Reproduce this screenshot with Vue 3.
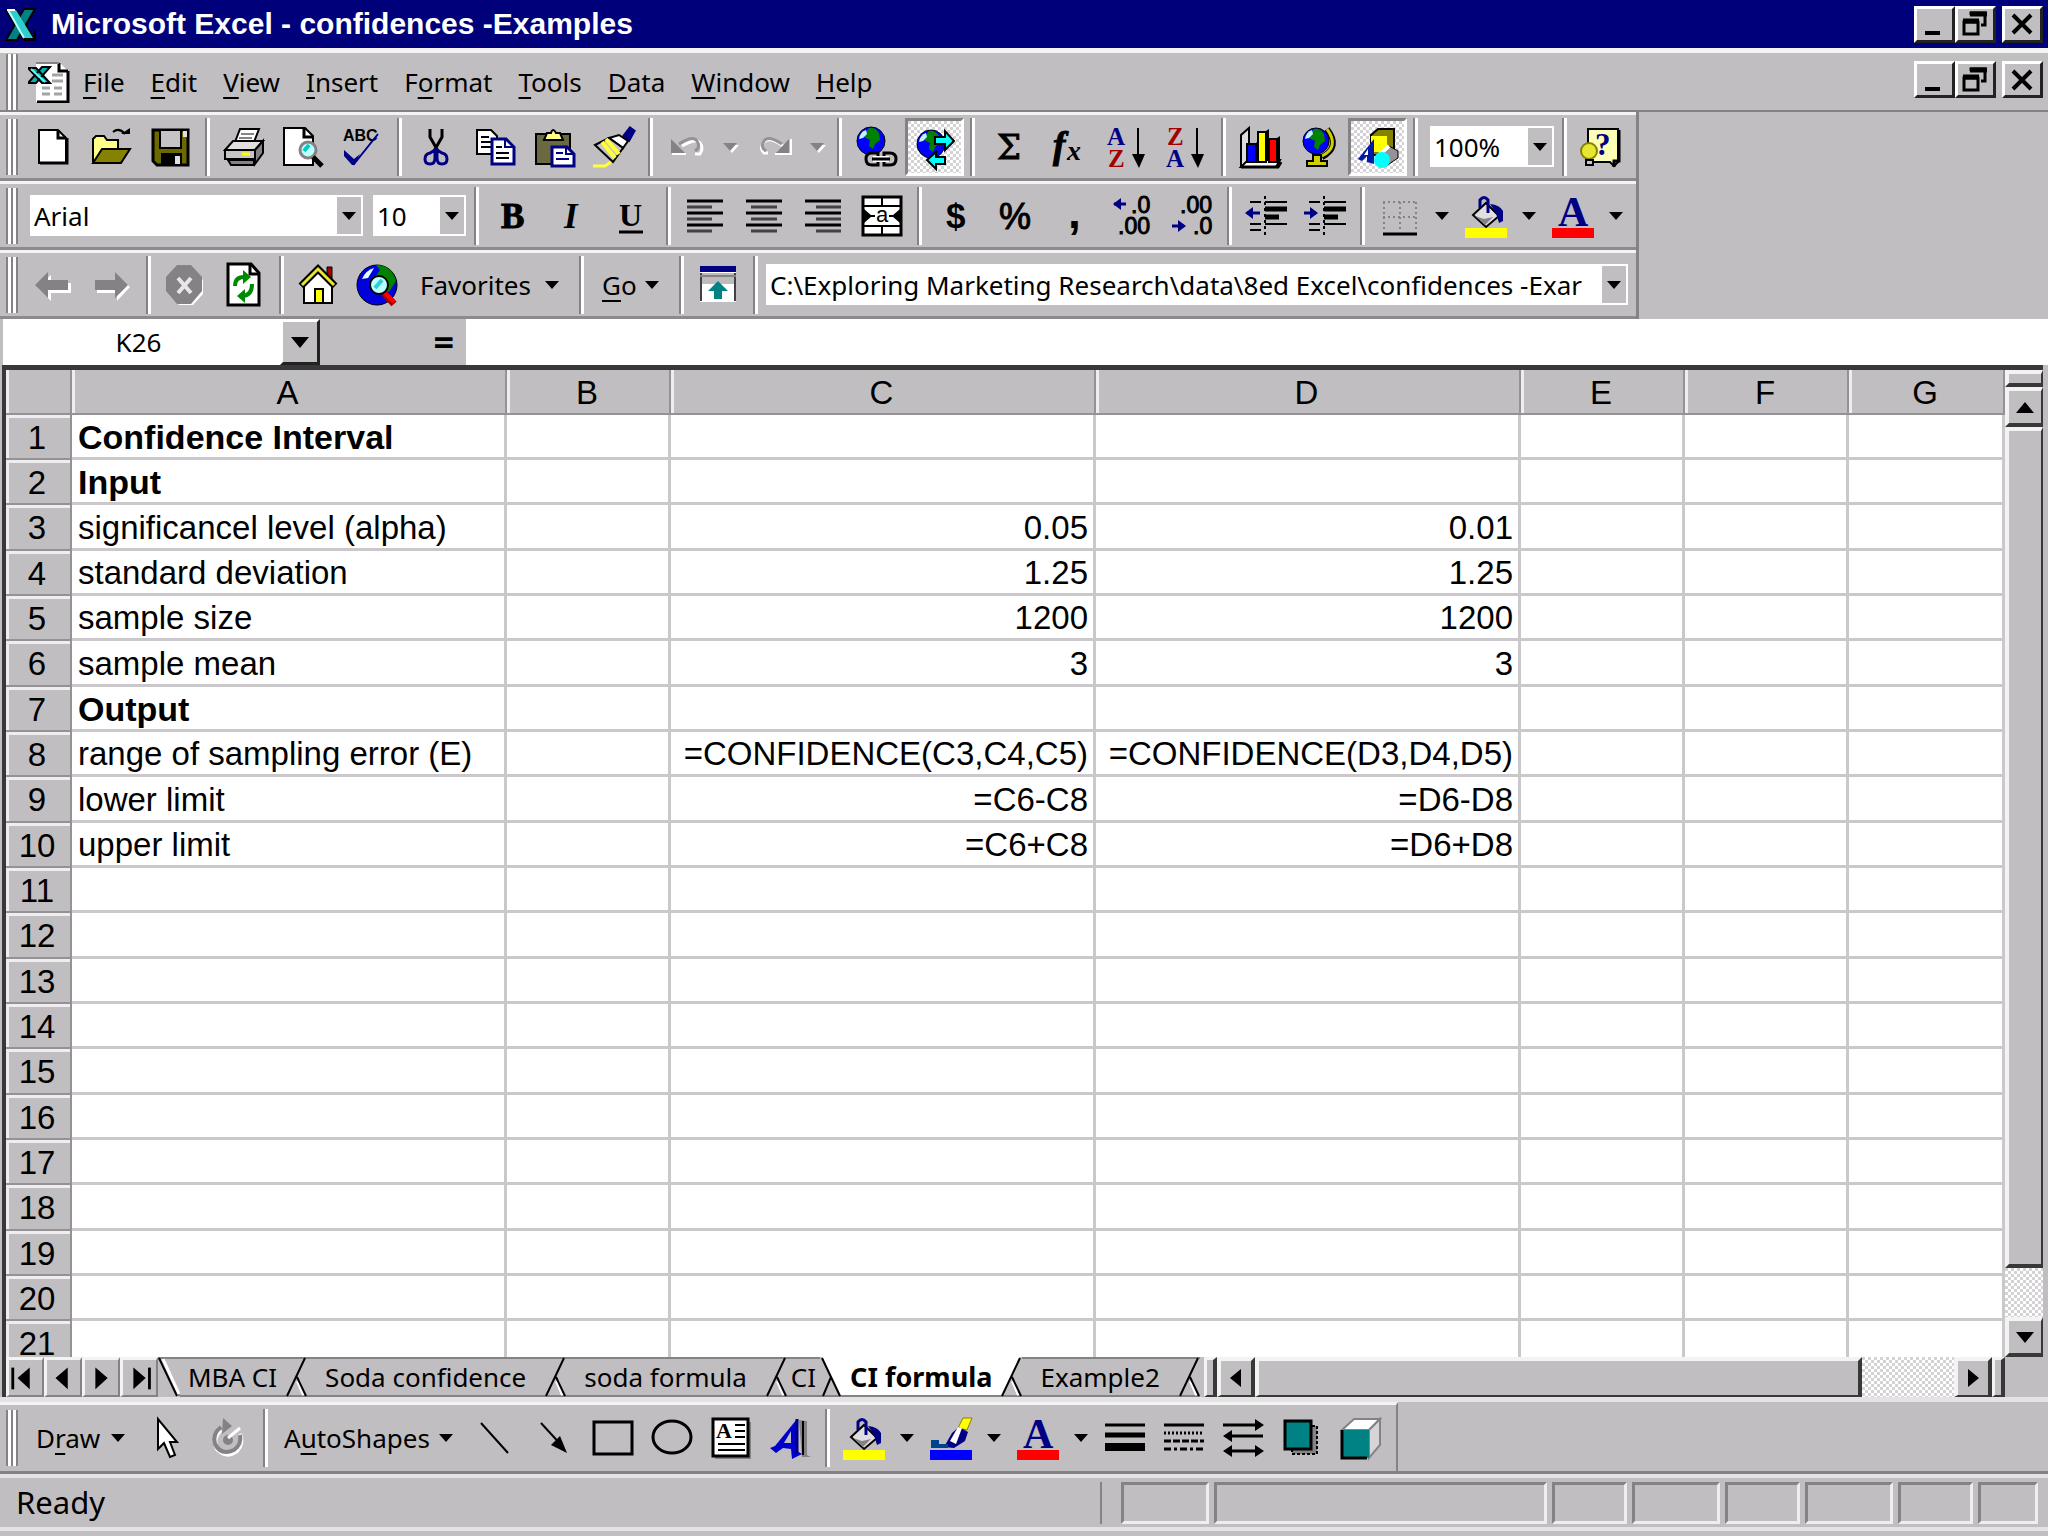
<template>
  <div class="excel">
    <header class="title-bar">
      <svg class="app-logo" viewBox="0 0 34 36" v-html="icons.logo"></svg>
      <h1 class="title">Microsoft Excel - confidences -Examples</h1>
      <div class="window-buttons">
        <button v-for="b in windowButtons" :key="b" class="win-btn" :class="b" :aria-label="b">
          <svg viewBox="0 0 34 30" v-html="icons[b]"></svg>
        </button>
      </div>
    </header>

    <nav class="menu-bar">
      <span class="grip"></span>
      <svg class="book-icon" viewBox="0 0 42 42" v-html="icons.book"></svg>
      <button v-for="m in menus" :key="m[1] + m[2]" class="menu-item">{{ m[0] }}<u>{{ m[1] }}</u>{{ m[2] }}</button>
      <div class="window-buttons">
        <button v-for="b in windowButtons" :key="b" class="win-btn" :class="b" :aria-label="'workbook ' + b">
          <svg viewBox="0 0 34 30" v-html="icons[b]"></svg>
        </button>
      </div>
    </nav>

    <div class="toolbars">
      <div v-for="(bar, n) in toolbars" :key="n" class="toolbar">
        <span class="grip"></span>
        <template v-for="(item, i) in bar" :key="i">
          <span v-if="item === '|'" class="sep"></span>
          <div v-else-if="item.combo" class="combo" :class="item.combo">
            <select :aria-label="item.combo"><option>{{ item.value }}</option></select>
            <span class="combo-arrow"><i class="caret"></i></span>
          </div>
          <button v-else-if="item.label" class="text-btn" :class="item.size">
            <span>{{ item.label[0] }}<u>{{ item.label[1] }}</u>{{ item.label[2] }}</span><i class="caret"></i>
          </button>
          <button v-else-if="item.drop" class="drop-btn" :aria-label="item.drop + ' options'">
            <i class="caret" :class="{ off: item.off }"></i>
          </button>
          <button v-else class="icon-btn" :class="{ pressed: item.on }" :aria-label="item.icon">
            <svg viewBox="0 0 42 42" v-html="icons[item.icon]"></svg>
          </button>
        </template>
      </div>
    </div>

    <div class="formula-bar">
      <input class="name-box" aria-label="Name box" value="K26">
      <button class="name-drop" aria-label="Names"><i class="caret big"></i></button>
      <button class="equals" aria-label="Edit formula">=</button>
      <input class="formula" aria-label="Formula">
    </div>

    <main class="workbook">
      <div class="sheet-row">
        <div class="sheet">
          <table>
            <colgroup>
              <col class="c-head"><col class="c-a"><col class="c-b"><col class="c-cd"><col class="c-cd">
              <col class="c-b"><col class="c-b"><col>
            </colgroup>
            <thead>
              <tr>
                <th></th>
                <th v-for="c in columns" :key="c">{{ c }}</th>
              </tr>
            </thead>
            <tbody>
              <tr v-for="r in 21" :key="r">
                <th>{{ r }}</th>
                <td :class="{ bold: bolds.includes(r) }">{{ cells[r]?.[0] }}</td>
                <td></td>
                <td class="num">{{ cells[r]?.[1] }}</td>
                <td class="num">{{ cells[r]?.[2] }}</td>
                <td></td>
                <td></td>
                <td></td>
              </tr>
            </tbody>
          </table>
        </div>
        <div class="vscroll">
          <span class="split"></span>
          <button class="scroll-btn" aria-label="Scroll up"><i class="tri up"></i></button>
          <span class="thumb"></span>
          <span class="track"></span>
          <button class="scroll-btn" aria-label="Scroll down"><i class="tri down"></i></button>
        </div>
      </div>

      <div class="tab-row">
        <button v-for="n in ['first', 'prev', 'next', 'last']" :key="n" class="nav-btn" :aria-label="n + ' sheet'">
          <svg viewBox="0 0 36 36" v-html="icons[n]"></svg>
        </button>
        <template v-for="t in tabs" :key="t.name">
          <svg class="edge" viewBox="0 0 22 40" v-html="edges[t.edge]"></svg>
          <button class="tab" :class="t.kind">{{ t.name }}</button>
        </template>
        <svg class="edge" viewBox="0 0 22 40" v-html="edges.back"></svg>
        <span class="hsplit first"></span>
        <div class="hscroll">
          <button class="scroll-btn" aria-label="Scroll left"><i class="tri left"></i></button>
          <span class="thumb"></span>
          <span class="track"></span>
          <button class="scroll-btn" aria-label="Scroll right"><i class="tri right"></i></button>
        </div>
        <span class="hsplit"></span>
        <span class="corner"></span>
      </div>
    </main>

    <div class="draw-area">
      <div class="toolbar">
        <span class="grip"></span>
        <template v-for="(item, i) in drawBar" :key="i">
          <span v-if="item === '|'" class="sep"></span>
          <button v-else-if="item.label" class="text-btn" :class="item.size">
            <span>{{ item.label[0] }}<u>{{ item.label[1] }}</u>{{ item.label[2] }}</span><i class="caret"></i>
          </button>
          <button v-else-if="item.drop" class="drop-btn" :aria-label="item.drop + ' options'"><i class="caret"></i></button>
          <button v-else class="icon-btn" :aria-label="item.icon">
            <svg viewBox="0 0 42 42" v-html="icons[item.icon]"></svg>
          </button>
        </template>
      </div>
    </div>

    <footer class="status-bar">
      <span class="ready">Ready</span>
      <span v-for="(p, i) in panels" :key="i" class="panel" :class="p"></span>
    </footer>
  </div>
</template>

<script setup>
const windowButtons = ['minimize', 'restore', 'close']

const menus = [
  ['', 'F', 'ile'], ['', 'E', 'dit'], ['', 'V', 'iew'], ['', 'I', 'nsert'], ['F', 'o', 'rmat'],
  ['', 'T', 'ools'], ['', 'D', 'ata'], ['', 'W', 'indow'], ['', 'H', 'elp'],
]

const ic = (icon, on = false) => ({ icon, on })

const toolbars = [
  [
    ic('new'), ic('open'), ic('save'), '|',
    ic('print'), ic('preview'), ic('spelling'), '|',
    ic('cut'), ic('copy'), ic('paste'), ic('painter'), '|',
    ic('undo'), { drop: 'undo', off: true }, ic('redo'), { drop: 'redo', off: true }, '|',
    ic('hyperlink'), ic('web', true), '|',
    ic('sum'), ic('fx'), ic('sortAsc'), ic('sortDesc'), '|',
    ic('chart'), ic('map'), ic('drawing', true), '|',
    { combo: 'zoom', value: '100%' }, '|', ic('help'),
  ],
  [
    { combo: 'font', value: 'Arial' }, { combo: 'size', value: '10' }, '|',
    ic('bold'), ic('italic'), ic('underline'), '|',
    ic('left'), ic('center'), ic('right'), ic('merge'), '|',
    ic('currency'), ic('percent'), ic('comma'), ic('incDecimal'), ic('decDecimal'), '|',
    ic('outdent'), ic('indent'), '|',
    ic('borders'), { drop: 'borders' }, ic('fill'), { drop: 'fill' }, ic('fontColor'), { drop: 'font color' },
  ],
  [
    ic('back'), ic('forward'), '|', ic('stop'), ic('refresh'), '|', ic('home'), ic('search'),
    { label: ['Favorites', '', ''], size: 'favorites' }, '|',
    { label: ['', 'G', 'o'], size: 'go' }, '|',
    ic('webBar'), '|',
    { combo: 'address', value: 'C:\\Exploring Marketing Research\\data\\8ed Excel\\confidences -Exar' },
  ],
]

const drawBar = [
  { label: ['D', 'r', 'aw'], size: 'draw' }, ic('pointer'), ic('rotate'), '|',
  { label: ['A', 'u', 'toShapes'], size: 'shapes' },
  ic('line'), ic('arrow'), ic('rect'), ic('oval'), ic('textBox'), ic('wordArt'), '|',
  ic('fill'), { drop: 'fill' }, ic('lineColor'), { drop: 'line color' }, ic('fontColor'), { drop: 'font color' },
  ic('lineStyle'), ic('dashStyle'), ic('arrowStyle'), ic('shadow'), ic('cube'),
]

const columns = ['A', 'B', 'C', 'D', 'E', 'F', 'G']
const bolds = [1, 2, 7]
const cells = {
  1: ['Confidence Interval'],
  2: ['Input'],
  3: ['significancel level (alpha)', '0.05', '0.01'],
  4: ['standard deviation', '1.25', '1.25'],
  5: ['sample size', '1200', '1200'],
  6: ['sample mean', '3', '3'],
  7: ['Output'],
  8: ['range of sampling error (E)', '=CONFIDENCE(C3,C4,C5)', '=CONFIDENCE(D3,D4,D5)'],
  9: ['lower limit', '=C6-C8', '=D6-D8'],
  10: ['upper limit', '=C6+C8', '=D6+D8'],
}

const tabs = [
  { name: 'MBA CI', edge: 'start', kind: 'snug' },
  { name: 'Soda confidence', edge: 'back', kind: '' },
  { name: 'soda formula', edge: 'back', kind: '' },
  { name: 'CI', edge: 'back', kind: 'tight' },
  { name: 'CI formula', edge: 'activeLeft', kind: 'active' },
  { name: 'Example2', edge: 'activeRight', kind: '' },
]

// slanted sides between the sheet tabs
const edges = {
  start: '<path d="M0 1H22M20 38h2" stroke="#848284" stroke-width="2"/><path d="M5 2l16 35" stroke="#fff" stroke-width="3"/><path d="M1 1l18 38" stroke="#000" stroke-width="2"/>',
  back: '<path d="M0 1H22M0 39H22" stroke="#848284" stroke-width="2"/><path d="M13 24l6 14" stroke="#fff" stroke-width="4"/><path d="M20 1L2 39M12 20l9 19" fill="none" stroke="#000" stroke-width="2"/>',
  activeLeft: '<path d="M2 0H22V38H20z" fill="#fff"/><path d="M0 39H22" stroke="#848284" stroke-width="2"/><path d="M2 1l18 38M11 20L3 39" fill="none" stroke="#000" stroke-width="2"/>',
  activeRight: '<path d="M20 0H0V38H3z" fill="#fff"/><path d="M0 39H22" stroke="#848284" stroke-width="2"/><path d="M13 24l6 14" stroke="#fff" stroke-width="4"/><path d="M20 1L2 39M12 20l9 19" fill="none" stroke="#000" stroke-width="2"/>',
}

const panels = ['p-s', 'p-xl', 'p-xs', 'p-s', 'p-xs', 'p-s', 'p-xs', 'p-end']

const serif = 'font-family="Liberation Serif" font-weight="bold"'
const sans = 'font-family="Liberation Sans"'

const globe = (x, y, r) => `
  <circle cx="${x}" cy="${y}" r="${r}" fill="#00f" stroke="#000" stroke-width="1"/>
  <path d="M${x - 2} ${y - r + 1}q6 -1 10 5l1 7l-5 4l-2 5l-4-3l1-6l-6-3l2-5z" fill="#008200"/>
  <path d="M${x - r + 2} ${y - 2}q1-7 7-9l1 4l-4 4z" fill="#c6efff"/>`

const bucket = (color) => `
  <path d="M8 20L21 8l13 13L21 32z" fill="#e0dfe0" stroke="#000" stroke-width="2"/>
  <path d="M10 21l10 9l8-8l-9 2z" fill="#848284"/>
  <path d="M15 13V5q4-5 8 0v13" fill="none" stroke="#000084" stroke-width="3"/>
  <path d="M25 9q10 1 13 7v10l-4 2l-3-10z" fill="#000084"/>
  <rect y="33" width="42" height="10" fill="${color}"/>`

const icons = {
  logo: '<path d="M2 4h10l18 29H19z" fill="#31cece" stroke="#000" stroke-width="2"/><path d="M20 3h11L13 34H2z" fill="#008284" stroke="#000" stroke-width="2"/><path d="M4 4h8l17 28h-8z" fill="#31cece"/><path d="M4 4l16 28" stroke="#bff" stroke-width="2"/><path d="M3 4h8" stroke="#fff" stroke-width="2"/><path d="M31 24v10H20" fill="none" stroke="#000" stroke-width="2"/>',
  minimize: '<rect x="8" y="22" width="15" height="4"/>',
  restore: '<path d="M13 6V4h14v12h-4M6 13h14v12H6z" fill="none" stroke="#000" stroke-width="3"/><path d="M12 5h17M5 12h16" stroke="#000" stroke-width="5"/>',
  close: '<path d="M8 6l18 18M26 6L8 24" stroke="#000" stroke-width="4"/>',
  book: '<path d="M8 2h24l8 8v31H8z" fill="#fff"/><path d="M31 2v8h9M40 10v31H9" fill="none" stroke="#000" stroke-width="3"/><path d="M8 2h23" stroke="#848284" stroke-width="2"/><path d="M24 14h11M24 20h11M14 27h8M26 27h8M14 33h8M26 33h8" stroke="#a5a3a5" stroke-width="3"/><path d="M0 7h8l14 15h-8zM14 6h8L8 22H0z" fill="#00b5b5" stroke="#000" stroke-width="2"/><path d="M3 8l14 13" stroke="#5ff" stroke-width="2"/>',
  new: '<path d="M8 4h19l8 8v25H8z" fill="#fff" stroke="#000" stroke-width="2"/><path d="M27 4v8h8" fill="none" stroke="#000" stroke-width="3"/><path d="M9 37h27V12" fill="none" stroke="#000" stroke-width="3"/>',
  open: '<path d="M3 36V13l3-3h8l3 4h11v8" fill="#ff8" stroke="#000" stroke-width="2"/><path d="M3 37l9-14h28l-9 14z" fill="#848200" stroke="#000" stroke-width="2"/><path d="M23 6q6-5 12 2" fill="none" stroke="#000" stroke-width="2"/><path d="M31 8h9V2z"/>',
  save: '<path d="M4 4h35v35H8l-4-4z" fill="#6b6900" stroke="#000" stroke-width="3"/><path d="M11 4h21v18H11z" fill="#c6c4c6" stroke="#000" stroke-width="2"/><path d="M12 27h21v12H12z"/><path d="M26 30h5v8h-5z" fill="#e0dfe0"/><path d="M34 5h4v6h-4z" fill="#e0dfe0"/>',
  print: '<path d="M12 16L17 3h19l-5 13z" fill="#fff" stroke="#000" stroke-width="2"/><path d="M18 8h13M16 12h13" stroke="#848284" stroke-width="2"/><path d="M2 24l8-9h30l-8 9z" fill="#e0dfe0" stroke="#000" stroke-width="2"/><path d="M2 24h30v9H2z" fill="#c6c4c6" stroke="#000" stroke-width="2"/><path d="M32 24l8-9v12l-8 11z" fill="#848284" stroke="#000" stroke-width="2"/><path d="M5 34h26v5H8z" fill="#848284" stroke="#000" stroke-width="2"/><path d="M19 28h8" stroke="#ff0" stroke-width="3"/>',
  preview: '<path d="M2 2h21l8 8v29H2z" fill="#fff" stroke="#000" stroke-width="2"/><path d="M22 2v9h9" fill="none" stroke="#000" stroke-width="3"/><circle cx="26" cy="24" r="8" fill="#bff" stroke="#848284" stroke-width="3"/><path d="M22 25l5-6" stroke="#0cc" stroke-width="4"/><path d="M31 31l9 9" stroke="#000" stroke-width="5"/>',
  spelling: `<text x="2" y="15" ${sans} font-size="16" font-weight="bold">ABC</text><path d="M4 28l9 10L37 8" fill="none" stroke="#000084" stroke-width="2"/><path d="M3 24l10 9l6-5l-6 11h-2L3 30z" fill="#000084"/>`,
  cut: '<path d="M15 3v8l8 14M27 3v8l-8 14" fill="none" stroke="#000" stroke-width="3"/><path d="M20 24l-5 3q-5 1-5 6t5 5t5-6zM22 24l5 3q5 1 5 6t-5 5t-5-6z" fill="none" stroke="#000084" stroke-width="3"/>',
  copy: '<path d="M3 4h14l6 6v18H3z" fill="#fff" stroke="#000" stroke-width="2"/><path d="M7 11h8M7 16h10M7 21h10" stroke="#000" stroke-width="2"/><path d="M18 13h14l8 8v17H18z" fill="#fff" stroke="#000084" stroke-width="3"/><path d="M31 13v8h9" fill="none" stroke="#000084" stroke-width="2"/><path d="M22 21h6M22 27h13M22 32h13" stroke="#000" stroke-width="2"/>',
  paste: '<path d="M3 8h34v30H3z" fill="#6b6942" stroke="#000" stroke-width="2"/><path d="M11 14l3-7h4q2-6 5 0h4l3 7z" fill="#ff8" stroke="#000" stroke-width="2"/><path d="M19 21h15l7 7v12H19z" fill="#fff" stroke="#000084" stroke-width="3"/><path d="M23 27h7M23 33h13M33 21v7h7" stroke="#000084" fill="none" stroke-width="2"/>',
  painter: '<path d="M32 10l6-8l4 3l-5 9z" fill="#000084" stroke="#000084" stroke-width="3"/><path d="M17 12l10-3l9 6l-5 7z" fill="#fff" stroke="#000" stroke-width="2"/><path d="M3 19l14-7l14 10L21 36z" fill="#c6c4c6" stroke="#000" stroke-width="2"/><path d="M14 13l13 15M10 16l13 16" stroke="#ffff31" stroke-width="4"/><path d="M1 40h12l6-4" fill="none" stroke="#ffff31" stroke-width="3"/>',
  undo: '<path d="M16 20q14-8 18-3t0 11h-5" stroke="#fff" fill="none" stroke-width="3"/><path d="M13 18q14-9 18-3t-2 10" fill="none" stroke="#949294" stroke-width="3"/><path d="M5 13v14h14z" fill="#848284"/><path d="M6 28h14" stroke="#fff" stroke-width="2"/>',
  redo: '<path d="M30 20q-14-10-19-4t0 11h4" fill="none" stroke="#fff" stroke-width="3"/><path d="M29 18q-14-9-18-3t2 10" fill="none" stroke="#949294" stroke-width="3"/><path d="M36 13v14H23z" fill="#848284"/><path d="M22 28h16V13" fill="none" stroke="#fff" stroke-width="2"/>',
  hyperlink: globe(16, 15, 14) + '<path d="M11 33q0-6 6-6h6v12h-6q-6 0-6-6zM41 33q0-6-6-6h-6v12h6q6 0 6-6z" fill="#c0bec0" stroke="#000" stroke-width="3"/><path d="M18 33h16" stroke="#fff" stroke-width="6"/><path d="M17 33h18" stroke="#000" stroke-width="3"/>',
  web: globe(17, 18, 14) + '<path d="M21 11h10V5l9 10l-9 9v-6H21z" fill="#0ff" stroke="#000" stroke-width="2"/><path d="M31 38H22v5l-9-9l9-8v5h9z" fill="#0ff" stroke="#000" stroke-width="2"/>',
  sum: `<text x="9" y="33" font-family="DejaVu Serif" font-size="34" stroke="#000">Σ</text>`,
  fx: `<text x="6" y="32" ${serif} font-style="italic" font-size="37" stroke="#000">f</text><text x="20" y="34" ${serif} font-style="italic" font-size="28">x</text>`,
  sortAsc: `<text x="1" y="19" ${serif} font-size="25" fill="#000084">A</text><text x="2" y="41" ${serif} font-size="25" fill="#a50000">Z</text><path d="M32 2v30" stroke="#000" stroke-width="2"/><path d="M26 28h13l-6 14z"/>`,
  sortDesc: `<text x="2" y="19" ${serif} font-size="25" fill="#a50000">Z</text><text x="1" y="41" ${serif} font-size="25" fill="#000084">A</text><path d="M32 2v30" stroke="#000" stroke-width="2"/><path d="M26 28h13l-6 14z"/>`,
  chart: '<path d="M2 41V9l8-7v30" fill="#dedcde" stroke="#000" stroke-width="2"/><path d="M2 41l7-7h32l-4 7z" fill="#fff" stroke="#000" stroke-width="2"/><path d="M8 18h9v18H8z" fill="#00f" stroke="#000" stroke-width="2"/><path d="M17 17l3-3v20l-3 2z"/><path d="M19 6h8v30h-8z" fill="#ff0" stroke="#000" stroke-width="2"/><path d="M27 5l3-2v31l-3 2z"/><path d="M30 13h8v23h-8z" fill="red" stroke="#000" stroke-width="2"/><path d="M38 12l3-2v24l-3 2z"/><path d="M2 41h37l3-5" fill="none" stroke="#000" stroke-width="3"/>',
  map: '<path d="M29 3q14 18-5 28" fill="none" stroke="#000" stroke-width="6"/><path d="M29 3q13 18-5 27" fill="none" stroke="#cece00" stroke-width="3"/>' + globe(18, 15, 13) + '<path d="M15 29h8v6h6v5H9v-5h6z" fill="#cece00" stroke="#000" stroke-width="2"/>',
  drawing: '<path d="M14 9l7-6h16v20l-6 6H14z" fill="#848200" stroke="#000" stroke-width="2"/><path d="M14 10h16v16H14z" fill="#ff0"/><path d="M1 33L17 13v25l-7-2v-6l-5 5z" fill="#0018a5"/><path d="M11 23v6H7z" fill="#fff"/><path d="M19 34l13-14l9 5v7L29 40z" fill="#949294" stroke="#000" stroke-width="1"/><path d="M22 29l10-9" stroke="#fff" stroke-width="4"/><circle cx="25" cy="34" r="8" fill="#0ff"/>',
  help: `<path d="M8 3h30v33l-4 4l-4-4H8z" fill="#ffffb5" stroke="#000" stroke-width="2"/><path d="M39 4v31h-5v6" fill="none" stroke="#000" stroke-width="3"/><text x="15" y="29" ${serif} font-size="31" fill="#000084">?</text><circle cx="9" cy="25" r="8" fill="#e7e731" stroke="#848200" stroke-width="2"/><path d="M6 34h7v5H6z" fill="#c6c4c6" stroke="#000" stroke-width="2"/>`,
  bold: `<text x="9" y="33" ${serif} font-size="35" stroke="#000">B</text>`,
  italic: `<text x="13" y="33" ${serif} font-style="italic" font-size="35">I</text>`,
  underline: `<text x="9" y="31" ${serif} font-size="32">U</text><path d="M9 37h24" stroke="#000" stroke-width="3"/>`,
  left: '<path d="M3 6h36M3 18h36M3 30h36" stroke="#000" stroke-width="3"/><path d="M3 12h25M3 24h25M3 36h25" stroke="#424142" stroke-width="3"/>',
  center: '<path d="M3 6h36M3 18h36M3 30h36" stroke="#000" stroke-width="3"/><path d="M8 12h26M8 24h26M8 36h26" stroke="#424142" stroke-width="3"/>',
  right: '<path d="M3 6h36M3 18h36M3 30h36" stroke="#000" stroke-width="3"/><path d="M14 12h25M14 24h25M14 36h25" stroke="#424142" stroke-width="3"/>',
  merge: `<path d="M2 2h38v38H2z" fill="#fff" stroke="#000" stroke-width="3"/><path d="M2 11h38M2 31h38M21 2v9M21 31v9" stroke="#000" stroke-width="2"/><path d="M3 21h11M28 21h11" stroke="#000" stroke-width="2"/><path d="M3 14v14l8-7zM39 14v14l-8-7z"/><text x="15" y="27" ${sans} font-size="22">a</text>`,
  currency: `<text x="11" y="33" ${sans} font-weight="bold" font-size="35">$</text>`,
  percent: `<text x="5" y="34" ${sans} font-size="36" stroke="#000">%</text>`,
  comma: `<text x="15" y="33" ${sans} font-weight="bold" font-size="46">,</text>`,
  incDecimal: `<path d="M2 9h12" stroke="#000084" stroke-width="3"/><path d="M9 3v12L1 9z" fill="#000084"/><text x="19" y="18" ${sans} font-size="23" stroke="#000">.0</text><text x="6" y="39" ${sans} font-size="23" stroke="#000">.00</text>`,
  decDecimal: `<text x="9" y="18" ${sans} font-size="23" stroke="#000">.00</text><text x="22" y="39" ${sans} font-size="23" stroke="#000">.0</text><path d="M1 31h12" stroke="#000084" stroke-width="3"/><path d="M7 25v12l8-6z" fill="#000084"/>`,
  outdent: '<path d="M5 7h11M20 7h22M20 29h22M5 29h11" stroke="#000" stroke-width="2"/><path d="M20 14h22M20 22h14" stroke="#000" stroke-width="5"/><path d="M5 35h11" stroke="#000" stroke-width="2"/><path d="M20 1v40" stroke="#000" stroke-width="2" stroke-dasharray="3 3"/><path d="M2 18h13" stroke="#000084" stroke-width="3"/><path d="M8 12v12L0 18z" fill="#000084"/>',
  indent: '<path d="M5 7h11M20 7h22M20 29h22M5 29h11" stroke="#000" stroke-width="2"/><path d="M20 14h22M20 22h14" stroke="#000" stroke-width="5"/><path d="M5 35h11" stroke="#000" stroke-width="2"/><path d="M20 1v40" stroke="#000" stroke-width="2" stroke-dasharray="3 3"/><path d="M0 18h12" stroke="#000084" stroke-width="3"/><path d="M6 12v12l8-6z" fill="#000084"/>',
  borders: '<path d="M5 7h34M5 22h34M6 7v30M22 7v30M38 7v30" fill="none" stroke="#848284" stroke-width="2" stroke-dasharray="2 3"/><path d="M5 39h34" stroke="#000" stroke-width="3"/>',
  fill: bucket('#ff0'),
  fontColor: `<text x="6" y="31" ${serif} font-size="42" fill="#000084">A</text><rect y="33" width="42" height="10" fill="red"/>`,
  back: '<path d="M6 23L20 11v8h20v10H20v8z" fill="#fff"/><path d="M4 21L17 8v8h20v10H17v8z" fill="#848284"/>',
  forward: '<path d="M40 23L27 11v8H7v10h20v8z" fill="#fff"/><path d="M38 21L25 8v8H5v10h20v8z" fill="#848284"/>',
  stop: '<path d="M15 5h14l10 11v14L29 41H15L5 30V16z" fill="#fff"/><path d="M13 1h14l11 12v14L27 40H13L2 27V13z" fill="#848284"/><path d="M14 14l13 15M27 14L14 29" stroke="#e7e7e7" stroke-width="4"/>',
  refresh: '<path d="M5 0h23l8 9v32H5z" fill="#fff" stroke="#000" stroke-width="3"/><path d="M27 0v10h9" fill="none" stroke="#000" stroke-width="3"/><path d="M12 22q0-9 9-9M29 20q0 11-9 12" fill="none" stroke="#008a00" stroke-width="4"/><path d="M20 6v14l8-7zM22 25v14l-8-7z" fill="#008a00"/>',
  home: '<path d="M30 3h5v14h-5z" fill="#a50000" stroke="#000" stroke-width="1"/><path d="M7 21L21 6l14 15v18H7z" fill="#fff" stroke="#000" stroke-width="2"/><path d="M4 22L21 5l17 17" fill="none" stroke="#000" stroke-width="7"/><path d="M5 21L21 5l16 16" fill="none" stroke="#e7e731" stroke-width="3"/><path d="M18 25h8v14h-8z" fill="#ff0" stroke="#000" stroke-width="2"/>',
  search: '<circle cx="21" cy="21" r="20" fill="#00d" stroke="#000" stroke-width="1"/><path d="M20 1q16 0 20 16l-7 11l-8-2l-5-14l4-6z" fill="#008200"/><path d="M6 15q4-9 12-11l-6 10z" fill="#dff"/><path d="M28 29l10 11" stroke="#a50000" stroke-width="7"/><path d="M29 29l9 9" stroke="red" stroke-width="4"/><circle cx="23" cy="21" r="9" fill="#bff" stroke="#000" stroke-width="2"/><path d="M19 24l7-8" stroke="#31cece" stroke-width="4"/>',
  webBar: '<path d="M3 3h36v35H3z" fill="#fff"/><path d="M3 9h36v11H3z" fill="#bdbbbd"/><path d="M4 9v28M38 9v28" stroke="#424142" stroke-width="2"/><path d="M3 5h36" stroke="#000084" stroke-width="6"/><path d="M3 12h36" stroke="#848284" stroke-width="2"/><path d="M21 17l10 10h-6v8h-8v-8h-6z" fill="#008284"/>',
  pointer: '<path d="M10 2v30l6-6l6 14l5-2l-5-13h7z" fill="#fff" stroke="#000" stroke-width="2"/>',
  rotate: '<path d="M14 13q-9 8-4 19q10 10 20 2q7-8 3-17" fill="none" stroke="#fff" stroke-width="4"/><path d="M14 10q-9 7-6 17q6 12 19 6q8-6 6-15" fill="none" stroke="#848284" stroke-width="4"/><path d="M16 1l9 8l-10 8z" fill="#848284"/><circle cx="21" cy="23" r="5" fill="#848284"/><path d="M21 21l12-10" stroke="#fff" stroke-width="3"/>',
  line: '<path d="M7 6l27 30" stroke="#000" stroke-width="2"/>',
  arrow: '<path d="M8 6l22 24" stroke="#000" stroke-width="2"/><path d="M34 36l-16-8l9-9z"/>',
  rect: '<path d="M2 5h38v32H2z" fill="none" stroke="#000" stroke-width="3"/>',
  oval: '<ellipse cx="21" cy="20" rx="19" ry="16" fill="none" stroke="#000" stroke-width="3"/>',
  textBox: `<path d="M5 5h36v37H5z" fill="#848284"/><path d="M3 2h35v37H3z" fill="#fff" stroke="#000" stroke-width="3"/><text x="6" y="21" ${serif} font-size="22">A</text><path d="M25 8h10M25 14h10M25 20h10M8 27h27M8 33h27" stroke="#000" stroke-width="2"/>`,
  wordArt: '<path d="M30 3l8 1v34l4 2h-9z" fill="#848284"/><path d="M34 4v34" stroke="#000" stroke-width="2"/><path d="M1 31l5-2L28 2v32l5 3l-10 5l-1-10l-8-1l-7 5z" fill="#0000ce"/><path d="M22 14v12l-7 0z" fill="#c0bec0"/><path d="M28 2v34" stroke="#000084" stroke-width="3"/>',
  lineColor: '<path d="M28 11L33 1h9l-5 12z" fill="#ff0" stroke="#848200" stroke-width="1"/><path d="M14 30l8-14l7-6l9 5l-3 9l-11 7z" fill="#000084"/><path d="M20 24l8-14l4 1l-6 16z" fill="#fff"/><path d="M1 25h8M1 29h17" stroke="#00428c" stroke-width="4"/><rect y="33" width="42" height="10" fill="#00f"/>',
  lineStyle: '<path d="M1 8h40" stroke="#000" stroke-width="3"/><path d="M1 18h40" stroke="#000" stroke-width="5"/><path d="M1 30h40" stroke="#000" stroke-width="8"/>',
  dashStyle: '<path d="M1 8h40" stroke="#000" stroke-width="3"/><path d="M1 16h40" stroke="#000" stroke-width="3" stroke-dasharray="2 2"/><path d="M1 24h40" stroke="#000" stroke-width="3" stroke-dasharray="7 2"/><path d="M1 32h40" stroke="#000" stroke-width="3" stroke-dasharray="7 3 3 3"/>',
  arrowStyle: '<path d="M1 8h36M6 19h35M6 34h32" stroke="#000" stroke-width="3"/><path d="M33 2v12l9-6zM10 13v12l-9-6zM10 28v12l-9-6zM33 28v12l9-6z"/>',
  shadow: '<path d="M11 9h25v28H11z" fill="#848284" stroke="#000" stroke-width="2" stroke-dasharray="3 2"/><path d="M4 4h26v28H4z" fill="#008284" stroke="#000" stroke-width="3"/>',
  cube: '<path d="M2 13L14 2h26L29 13z" fill="#fff" stroke="#848284" stroke-width="2"/><path d="M29 13L40 2v26L29 41z" fill="#d6d4d6" stroke="#848284" stroke-width="2"/><path d="M2 13h27v28H2z" fill="#008284"/><path d="M2 13v28h25" fill="none" stroke="#000" stroke-width="3"/>',
  first: '<path d="M4 7v23" stroke="#000" stroke-width="3"/><path d="M22 7v23L9 18z"/>',
  prev: '<path d="M22 7v23L9 18z"/>',
  next: '<path d="M11 7v23l13-12z"/>',
  last: '<path d="M28 7v23" stroke="#000" stroke-width="3"/><path d="M11 7v23l13-12z"/>',
}
</script>

<style>
body {
  background: #c0bec0;
}
</style>

<style scoped>
.excel {
  display: flex;
  flex-direction: column;
  height: 100vh;
  overflow: hidden;
  background: #c0bec0;
  color: #000;
  font-family: "Noto Sans", "Liberation Sans", sans-serif;
  font-size: 26px;
}
.excel * {
  box-sizing: border-box;
}
button, input, select {
  margin: 0;
  padding: 0;
  border: 0;
  border-radius: 0;
  background: none;
  color: inherit;
  font: inherit;
}
svg {
  display: block;
}
u {
  text-decoration-thickness: 2px;
  text-underline-offset: 5px;
}

/* title and menu */
.title-bar {
  display: flex;
  align-items: center;
  flex: none;
  height: 48px;
  padding: 0 5px 0 4px;
  background: #00007b;
  color: #fff;
}
.app-logo {
  width: 34px;
  height: 36px;
}
.title {
  margin: 0 0 0 13px;
  font: bold 30px "Liberation Sans", Arial, sans-serif;
}
.window-buttons {
  display: flex;
  margin-left: auto;
}
.win-btn {
  width: 41px;
  height: 37px;
  background: #c0bec0;
  border: 3px solid;
  border-color: #fff #222 #222 #fff;
}
.win-btn.close {
  margin-left: 6px;
}
.win-btn svg {
  width: 34px;
  height: 30px;
}
.menu-bar {
  display: flex;
  align-items: center;
  flex: none;
  height: 64px;
  padding-right: 5px;
  border-top: 5px solid #f4f3f4;
  border-bottom: 2px solid #848284;
}
.menu-bar .window-buttons {
  align-self: flex-start;
  margin-top: 8px;
}
.book-icon {
  width: 42px;
  height: 42px;
  margin-left: 6px;
}
.menu-item {
  padding: 0 13px;
  height: 50px;
}

/* toolbars */
.toolbars {
  width: fit-content;
  flex: none;
  border-right: 3px solid #848284;
}
.toolbar {
  display: flex;
  align-items: center;
  height: 69px;
  padding-right: 6px;
  border-top: 3px solid #f4f3f4;
  border-bottom: 3px solid #8c8a8c;
}
.grip {
  flex: none;
  width: 12px;
  height: 56px;
  margin: 0 4px 0 6px;
  border: solid #848284;
  border-width: 0 2px;
  background: linear-gradient(90deg, #fff 0 3px, #848284 3px 5px, #fff 5px 8px);
}
.sep {
  flex: none;
  width: 15px;
  height: 58px;
  background: linear-gradient(90deg, transparent 0 6px, #848284 6px 8px, #fff 8px 11px, transparent 11px);
}
.icon-btn {
  display: flex;
  flex: none;
  align-items: center;
  justify-content: center;
  width: 59px;
  height: 58px;
}
.icon-btn svg {
  flex: none;
  width: 42px;
  height: 42px;
  overflow: visible;
}
.pressed, .track {
  background: repeating-conic-gradient(#fff 0 25%, #d4d2d4 0 50%) 0 0 / 6px 6px;
}
.pressed {
  border: 3px solid;
  border-color: #848284 #fff #fff #848284;
}
.drop-btn {
  display: flex;
  flex: none;
  align-items: center;
  justify-content: center;
  width: 28px;
  height: 58px;
}
.caret {
  flex: none;
  border: solid transparent;
  border-width: 8px 7px 0;
  border-top-color: #000;
}
.caret.big {
  border-width: 11px 9px 0;
}
.caret.off {
  border-top-color: #848284;
  filter: drop-shadow(2px 2px 0 #fff);
}
.text-btn {
  display: flex;
  flex: none;
  align-items: center;
  justify-content: space-between;
  height: 58px;
  padding: 0 14px;
}
.text-btn.favorites {
  width: 167px;
}
.text-btn.go {
  width: 85px;
}
.text-btn.draw {
  width: 117px;
}
.text-btn.shapes {
  width: 193px;
  padding: 0 12px;
}
.combo {
  display: flex;
  height: 41px;
  margin: 0 2px 0 8px;
  padding: 2px;
  background: #fff;
}
.combo select {
  flex: 1;
  width: 0;
  min-width: 0;
  padding-left: 2px;
  appearance: none;
  line-height: 34px;
}
.combo-arrow {
  display: flex;
  align-items: center;
  justify-content: center;
  width: 24px;
  background: #c0bec0;
}
.combo.font {
  width: 333px;
}
.combo.size {
  width: 93px;
}
.combo.zoom {
  width: 124px;
}
.combo.address {
  flex: 1;
  margin-left: 4px;
}

/* formula bar */
.formula-bar {
  display: flex;
  flex: none;
  height: 46px;
  padding-left: 3px;
}
.name-box {
  width: 277px;
  padding-right: 6px;
  background: #fff;
  text-align: center;
}
.name-drop {
  display: flex;
  align-items: center;
  justify-content: center;
  width: 40px;
  border: 3px solid;
  border-color: #fff #222 #222 #fff;
}
.equals {
  width: 146px;
  padding-right: 12px;
  text-align: right;
  font-size: 36px;
  font-weight: bold;
  line-height: 40px;
}
.formula {
  flex: 1;
  background: #fff;
}

/* sheet */
.workbook {
  display: flex;
  flex: 1;
  flex-direction: column;
  min-height: 0;
  margin: 0 5px 0 2px;
  border: solid #393839;
  border-width: 5px 0 0 4px;
}
.sheet-row {
  display: flex;
  flex: 1;
  min-height: 0;
}
.sheet {
  flex: 1;
  overflow: hidden;
  background: #fff;
}
table {
  width: 100%;
  table-layout: fixed;
  border-collapse: separate;
  border-spacing: 0;
  font: 33px/40px "Liberation Sans", Arial, sans-serif;
}
.c-head {
  width: 66px;
}
.c-a {
  width: 435px;
}
.c-b {
  width: 164px;
}
.c-cd {
  width: 425px;
}
th {
  height: 45px;
  padding: 2px 2px 0 0;
  background: #c0bec0;
  border: solid #949294;
  border-width: 0 2px 2px 0;
  box-shadow: inset 3px 3px 0 #efedef;
  font-weight: normal;
}
thead th {
  box-shadow: inset 3px 0 0 #efedef;
}
td {
  height: 45px;
  padding: 2px 5px 0 6px;
  border: solid #cac8ca;
  border-width: 0 3px 3px 0;
  white-space: nowrap;
}
tbody tr:nth-child(3n) th,
tbody tr:nth-child(3n) td {
  height: 46px;
}
.bold {
  font-size: 34px;
  font-weight: bold;
}
.num {
  text-align: right;
}

/* scroll bars */
.vscroll {
  display: flex;
  flex-direction: column;
  width: 38px;
}
.scroll-btn {
  display: flex;
  flex: none;
  align-items: center;
  justify-content: center;
  width: 38px;
  height: 40px;
}
.scroll-btn, .thumb, .split, .hsplit {
  background: #c0bec0;
  border: solid;
  border-color: #f4f3f4 #393839 #393839 #f4f3f4;
}
.vscroll > * {
  border-width: 4px 2px 4px 4px;
}
.vscroll .track {
  border: 0;
}
.split {
  height: 17px;
}
.vscroll .thumb {
  flex: 17;
}
.vscroll .track {
  flex: 1;
}
.tri {
  border: 9px solid transparent;
}
.tri.up {
  border-width: 0 9px 11px;
  border-bottom-color: #000;
}
.tri.down {
  border-width: 11px 9px 0;
  border-top-color: #000;
}
.tri.left {
  border-width: 9px 11px 9px 0;
  border-right-color: #000;
}
.tri.right {
  border-width: 9px 0 9px 11px;
  border-left-color: #000;
}
.tab-row {
  display: flex;
  flex: none;
  height: 40px;
}
.nav-btn {
  width: 38px;
  border: solid;
  border-width: 3px 2px 2px 3px;
  border-color: #f4f3f4 #848284 #848284 #f4f3f4;
}
.nav-btn svg {
  width: 34px;
  height: 34px;
}
.edge {
  width: 22px;
  height: 40px;
}
.tab {
  padding: 0 18px;
  border: solid #848284;
  border-width: 2px 0;
  line-height: 34px;
}
.tab.snug {
  padding: 0 8px;
}
.tab.tight {
  padding: 0 4px;
}
.tab.active {
  padding: 0 8px;
  background: #fff;
  border-top-color: #fff;
  font-size: 27px;
  font-weight: bold;
}
.hsplit {
  width: 13px;
  border-width: 3px 4px 2px 3px;
}
.hsplit.first {
  margin-left: 4px;
}
.hscroll {
  display: flex;
  flex: 1;
}
.hscroll > * {
  border-width: 4px 4px 2px 4px;
}
.hscroll .thumb {
  flex: 13;
}
.hscroll .track {
  flex: 2;
  border: 0;
}
.corner {
  width: 38px;
}

/* drawing toolbar and status */
.draw-area {
  display: flex;
  flex: none;
  border-top: 5px solid #e4e2e4;
  border-bottom: 3px solid #848284;
}
.draw-area .toolbar {
  border-right: 2px solid #848284;
  border-bottom: 0;
}
.status-bar {
  display: flex;
  flex: none;
  gap: 5px;
  height: 62px;
  padding: 4px 10px 12px 16px;
  border-top: 4px solid #e4e2e4;
  background: linear-gradient(#e4e2e4, #e4e2e4) 0 49px / 100% 4px no-repeat;
}
.ready {
  flex: 1;
  margin-right: 14px;
  border-right: 2px solid #848284;
  font-size: 31px;
  line-height: 40px;
}
.panel {
  height: 42px;
  border: 3px solid;
  border-color: #848284 #efedef #efedef #848284;
}
.p-xs {
  width: 75px;
}
.p-s {
  width: 88px;
}
.p-xl {
  width: 333px;
}
.p-end {
  width: 60px;
}
</style>
